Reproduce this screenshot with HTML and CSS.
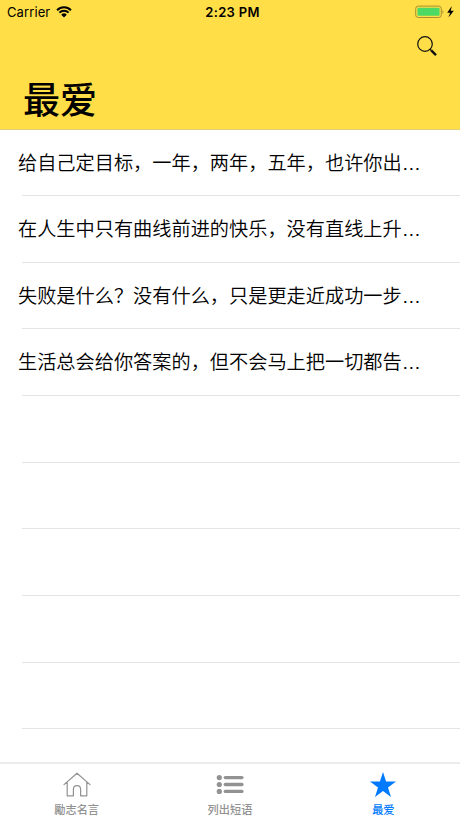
FILE: index.html
```
<!DOCTYPE html>
<html lang="zh-CN">
<head>
<meta charset="utf-8">
<title>最爱</title>
<link rel="stylesheet" href="styles.css">
</head>
<body>
<div class="app">
  <header class="header">
    <div class="status">
      <div class="carrier">
        <span>Carrier</span>
        <svg class="wifi" viewBox="0 0 16 12" width="16" height="12"><path d="M0.7 4.3A10.4 10.4 0 0 1 15.3 4.3M3.1 6.9A7 7 0 0 1 12.9 6.9" transform="translate(.4 .1) scale(.95)" fill="none" stroke="#000" stroke-width="2.1"/><path d="M8 11.4L5.2 8.7A4 4 0 0 1 10.8 8.7Z"/></svg>
      </div>
      <div class="time">2:23 PM</div>
      <div class="power">
        <svg viewBox="0 0 40 14" width="40" height="14"><rect x=".7" y="1.1" width="25.6" height="11.4" rx="2.6" fill="none" stroke="#a5902f" stroke-width="1"/><rect x="2.4" y="2.8" width="22.2" height="8" rx="1" fill="#4cd964"/><path d="M27.6 4.6q1.5 2.2 0 4.4z" fill="#85742b"/><path d="M36.8 1L32.2 7.7H35.1L33.5 12.6L38.8 5.8H35.7Z"/></svg>
      </div>
    </div>
    <div class="tools">
      <svg viewBox="0 0 20 21" width="20" height="21" fill="none" stroke="#111"><circle cx="8" cy="8" r="7.3" stroke-width="1.2"/><path d="M12.8 12.8L14.4 14.6" stroke-width="1.4"/><path d="M14.2 14.4L19 19.2" stroke-width="2.4"/></svg>
    </div>
    <h1 class="title">最爱</h1>
  </header>
  <main class="list">
    <div class="row">给自己定目标，一年，两年，五年，也许你出<span class="more">…</span></div>
    <div class="row">在人生中只有曲线前进的快乐，没有直线上升<span class="more">…</span></div>
    <div class="row">失败是什么？没有什么，只是更走近成功一步<span class="more">…</span></div>
    <div class="row">生活总会给你答案的，但不会马上把一切都告<span class="more">…</span></div>
    <div class="row"></div>
    <div class="row"></div>
    <div class="row"></div>
    <div class="row"></div>
    <div class="row"></div>
  </main>
  <nav class="tabs">
    <div class="tab">
      <svg viewBox="0 0 28 28" width="28" height="28" fill="none" stroke="#929292" stroke-width="1.2"><path d="M1 14.6L14 3.2L27 14.6M4.2 12V25.8H10.4V19.3Q10.4 15.6 14 15.6T17.6 19.3V25.8H23.8V12" stroke-linejoin="round" stroke-linecap="round"/></svg>
      <span>勵志名言</span>
    </div>
    <div class="tab">
      <svg viewBox="0 0 28 28" width="28" height="28" fill="#929292"><circle cx="3.3" cy="7.6" r="2.6"/><circle cx="3.3" cy="14.5" r="2.6"/><circle cx="3.3" cy="21.4" r="2.6"/><rect x="7.6" y="5.9" width="20" height="3.4" rx="1.7"/><rect x="7.6" y="12.8" width="20" height="3.4" rx="1.7"/><rect x="7.6" y="19.7" width="20" height="3.4" rx="1.7"/></svg>
      <span>列出短语</span>
    </div>
    <div class="tab active">
      <svg viewBox="0 0 28 28" width="28" height="28" fill="#007aff"><path d="M14 2L17.1 11.5H27L19 17.4L22 27L14 21.1L6 27L9 17.4L1 11.5H10.9Z"/></svg>
      <span>最爱</span>
    </div>
  </nav>
</div>
</body>
</html>
```
FILE: styles.css
```
* { box-sizing: border-box; }
body {
  margin: 0;
  background: #fff;
  color: #000;
  font-family: Inter, "Noto Sans CJK SC", sans-serif;
}
svg { display: block; flex: none; }
.app {
  display: flex;
  flex-direction: column;
  width: 460px;
  height: 818px;
  overflow: hidden;
}
.header {
  flex: none;
  height: 129.5px;
  background: #ffde47;
  border-bottom: 1px solid #e0cf78;
}
.status {
  display: grid;
  grid-template-columns: 1fr auto 1fr;
  align-items: center;
  height: 24px;
  padding: 0 5px 0 7px;
  font-size: 13px;
  line-height: 24px;
}
.carrier { display: flex; align-items: center; gap: 6px; letter-spacing: .1px; }
.time { font-weight: 600; letter-spacing: .3px; margin-left: 3px; }
.power { display: flex; justify-content: flex-end; }
.tools {
  display: flex;
  justify-content: flex-end;
  height: 46px;
  padding: 12px 23px 0 0;
}
.title {
  margin: 0;
  padding-left: 23px;
  font-size: 37px;
  font-weight: 500;
  line-height: 56px;
  font-family: "Noto Sans CJK SC", sans-serif;
}
.list { flex: 1; min-height: 0; overflow: hidden; }
.row {
  height: 66.67px;
  padding-left: 18px;
  font-family: "Noto Sans CJK SC", sans-serif;
  font-size: 19.2px;
  font-weight: 350;
  line-height: 64px;
  white-space: nowrap;
  background: linear-gradient(#e4e4e6, #e4e4e6) 22px 100% / 100% 1px no-repeat;
}
.more { font-family: "Liberation Sans", sans-serif; }
.tabs {
  flex: none;
  display: grid;
  grid-template-columns: repeat(3, 1fr);
  height: 56px;
  border-top: 2px solid #ececec;
  background: #fff;
}
.tab {
  display: flex;
  flex-direction: column;
  align-items: center;
  padding-top: 6px;
  color: #929292;
  font-size: 11.2px;
  font-weight: 500;
  line-height: 25px;
}
.active { color: #007aff; }
```
